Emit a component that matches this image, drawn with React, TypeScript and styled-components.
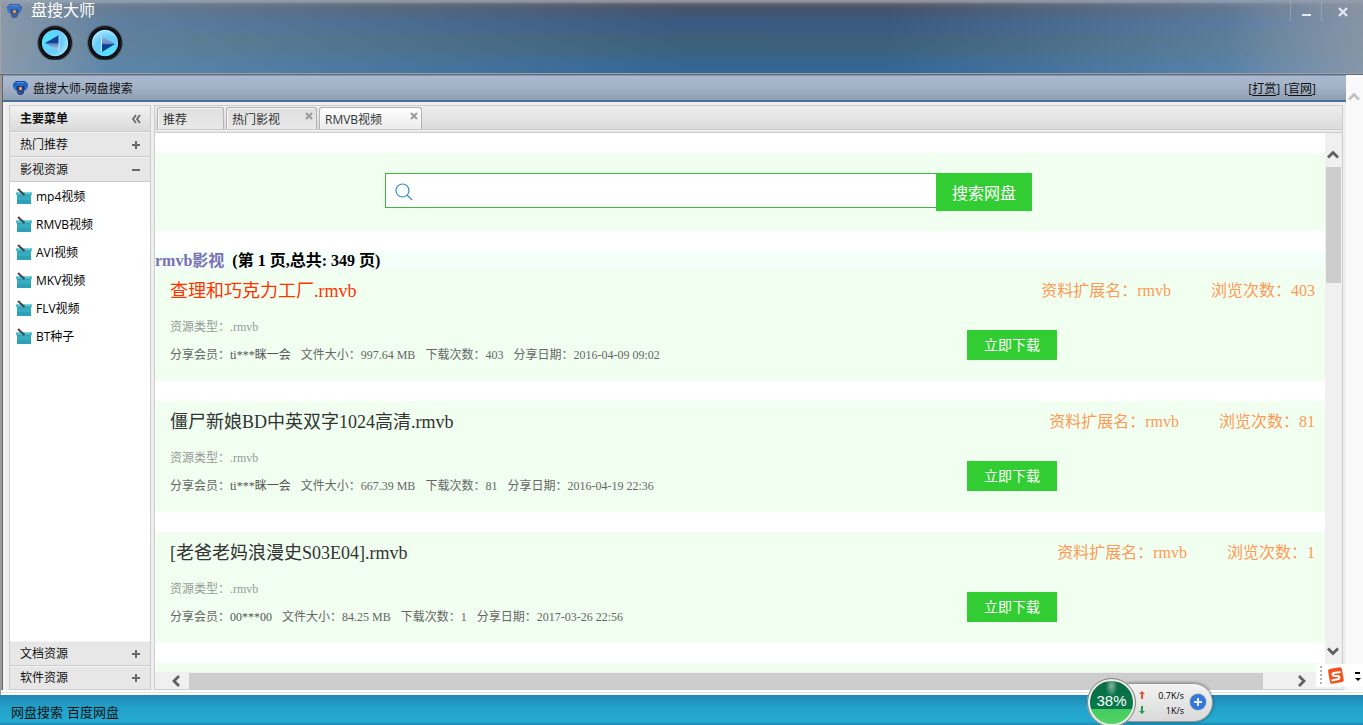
import React from "react";
import styled, { createGlobalStyle, css } from "styled-components";

const ui = `"Open Sans", "Noto Sans CJK SC", sans-serif`;
const song = `"Liberation Serif", "Noto Sans CJK SC", serif`;
const line = "#cdcdcd";

const GlobalStyle = createGlobalStyle`
  * { box-sizing: border-box; }
  body { margin: 0; font: 12px/16px ${ui}; color: #111; }
  button { padding: 0; border: 0; background: none; font: inherit; color: inherit; cursor: pointer; }
  h1, h2, h3, p, ul { margin: 0; padding: 0; font-weight: inherit; font-size: inherit; }
  ul { list-style: none; }
  a { color: inherit; text-decoration: none; }
  svg { display: block; flex: none; }
`;

const Desktop = styled.div`
  position: relative;
  display: flex;
  flex-direction: column;
  height: 100vh;
  overflow: hidden;
  background: #9a9a9a;
`;

const Header = styled.header`
  flex: none;
  height: 75px;
  border-bottom: 1px solid #666a70;
  box-shadow: inset 0 -1px #9aa3ad, inset 1px 0 #a3a3a3;
  background:
    linear-gradient(90deg, rgba(150, 160, 172, 0.75), rgba(150, 160, 172, 0) 8%, rgba(150, 155, 165, 0) 90%, rgba(150, 155, 165, 0.65)),
    linear-gradient(90deg, rgba(140, 170, 195, 0.55), rgba(120, 160, 195, 0) 50%, rgba(120, 155, 190, 0) 65%, rgba(135, 165, 195, 0.6)),
    linear-gradient(#9296a0 0, #8a8e99 2px, #5b5f6c 4px, #47546b 8px, #3c5775 16px, #375a84 23px, #3d5f78 40px, #3a627f 52px, #346692 64px, #356694 73px);
`;

const TitleBar = styled.div`
  display: flex;
  align-items: center;
  gap: 8px;
  height: 21px;
  padding-left: 5px;
  color: #fff;
  h1 { flex: 1; font-size: 16px; line-height: 21px; }
`;

const WindowButton = styled.button<{ $width: number }>`
  display: flex;
  align-items: center;
  justify-content: center;
  width: ${(p) => p.$width}px;
  height: 20px;
  padding-top: 2px;
  border-left: 1px solid rgba(190, 200, 215, 0.35);
  & + & { margin-left: -8px; }
`;

const NavButtons = styled.nav`
  display: flex;
  gap: 10px;
  height: 40px;
  padding: 1px 35px;
`;

const Body = styled.div`
  flex: 1;
  display: flex;
  min-height: 0;
  margin-left: 2px;
  border-left: 1px solid #666;
  background: #f9f9f9;
`;

const Workspace = styled.div`
  flex: 1;
  display: flex;
  flex-direction: column;
  min-width: 0;
  background: #efefef;
`;

const SiteBar = styled.div`
  flex: none;
  display: flex;
  align-items: center;
  height: 27px;
  padding: 0 30px 0 8px;
  border-top: 1px solid #8199b8;
  border-bottom: 2px solid #4a6f98;
  background: linear-gradient(#a9b9cf, #a5b4c8 40%, #8f9fb3);
  h2 { flex: 1; padding: 1px 0 0 4px; }
`;

const SiteLinks = styled.div`
  display: flex;
  gap: 4px;
  padding-top: 1px;
  a { text-decoration: underline; text-underline-offset: 2px; }
`;

const Columns = styled.div`
  flex: 1;
  display: flex;
  gap: 3px;
  min-height: 0;
  padding: 3px 3px 0 6px;
`;

const Sidebar = styled.aside`
  flex: none;
  display: flex;
  flex-direction: column;
  width: 142px;
  border: 1px solid ${line};
  background: #fff;
`;

const SideHead = styled.button<{ $title?: boolean }>`
  flex: none;
  display: flex;
  align-items: center;
  justify-content: space-between;
  height: 25px;
  padding: 0 9px 0 10px;
  border-top: 1px solid #f3f3f3;
  border-bottom: 1px solid ${line};
  background: #e7e7e7;
  &:last-child { height: 23px; border-bottom: 0; }
  ${(p) =>
    p.$title &&
    css`
      height: 26px;
      font-weight: 700;
      background: linear-gradient(#f1f1f1, #dadada);
    `}
`;

const SideList = styled.ul`
  flex: 1;
  min-height: 0;
`;

const SideLink = styled.a`
  display: flex;
  align-items: center;
  gap: 4px;
  height: 28px;
  padding: 2px 6px 0;
  color: #000;
`;

const Main = styled.main`
  flex: 1;
  display: flex;
  flex-direction: column;
  min-width: 0;
  border: 1px solid ${line};
  background: #fff;
`;

const Tabs = styled.div`
  flex: none;
  display: flex;
  align-items: flex-end;
  gap: 2px;
  height: 24px;
  padding-left: 2px;
  border-bottom: 1px solid ${line};
  background: linear-gradient(#ededed, #dbdbdb);
`;

const TabGap = styled.div`
  flex: none;
  height: 3px;
  border-bottom: 1px solid ${line};
  background: #ebebeb;
`;

const Tab = styled.div<{ $width: number; $active?: boolean }>`
  display: flex;
  align-items: flex-start;
  justify-content: space-between;
  width: ${(p) => p.$width}px;
  height: 22px;
  padding: 4px 3px 0 5px;
  border: 1px solid #b4b4b4;
  border-bottom: 0;
  border-radius: 3px 3px 0 0;
  box-shadow: inset 1px 1px #f6f6f6;
  background: ${(p) => (p.$active ? "linear-gradient(#fff, #ebebeb)" : "linear-gradient(#dfdfdf, #e9e9e9)")};
  color: #333;
`;

const Frame = styled.div`
  flex: 1;
  display: grid;
  grid-template: minmax(0, 1fr) 17px / minmax(0, 1fr) 17px;
  min-height: 0;
  background: #f0f0f0;
`;

const Page = styled.div`
  overflow: hidden;
  padding-top: 20px;
  background: #fff;
  font-family: ${song};
`;

const SearchForm = styled.form`
  display: flex;
  align-items: flex-start;
  height: 78px;
  padding: 20px 230px;
  margin-bottom: 20px;
  background: #f0fff0;
`;

const SearchBox = styled.label`
  display: flex;
  align-items: center;
  gap: 8px;
  flex: 0 0 551px;
  height: 35px;
  padding: 2px 8px 0 9px;
  border: 1px solid #3fb83f;
  border-right: 0;
  background: #fff;
  input { flex: 1; border: 0; outline: 0; background: none; font: 16px ${song}; }
`;

const SearchButton = styled.button`
  flex: none;
  width: 96px;
  height: 38px;
  padding-top: 3px;
  background: #32cd32;
  color: #fff;
  font-size: 16px;
`;

const PageTitle = styled.h2`
  display: flex;
  gap: 8px;
  height: 19px;
  background: #f5fffa;
  color: #000;
  font-size: 16px;
  line-height: 19px;
  font-weight: 700;
  span { color: #7a70b6; }
`;

const Card = styled.article`
  height: 111px;
  margin-bottom: 20px;
  padding: 0 10px 0 15px;
  background: #f0fff0;
`;

const CardHead = styled.div`
  display: flex;
  gap: 40px;
  line-height: 42px;
  font-size: 16px;
  color: #ff9955;
`;

const CardTitle = styled.h3<{ $hot?: boolean }>`
  flex: 1;
  font-size: 18px;
  color: ${(p) => (p.$hot ? "#ff3300" : "#333")};
`;

const CardBody = styled.div`
  display: flex;
  align-items: center;
  justify-content: space-between;
  padding: 1px 258px 0 0;
  line-height: 28px;
  color: #666;
`;

const Kind = styled.p`
  color: #999;
`;

const Facts = styled.p`
  display: flex;
  gap: 10px;
  b { font-weight: 400; color: #555; }
`;

const Download = styled.button`
  flex: none;
  width: 90px;
  height: 30px;
  margin-top: 8px;
  padding-top: 2px;
  background: #32cd32;
  color: #fff;
  font-size: 14px;
`;

const VBar = styled.div`
  display: flex;
  flex-direction: column;
  justify-content: space-between;
  padding: 13px 0;
`;

const HBar = styled.div`
  grid-column: 1 / -1;
  display: flex;
  padding: 0 32px 0 13px;
`;

const Arrow = styled.button`
  flex: none;
  display: grid;
  place-items: center;
  width: 16px;
  height: 17px;
`;

const VTrack = styled.div`
  flex: 1;
  padding: 4px 1px 0;
  &::before { content: ""; display: block; height: 116px; background: #cdcdcd; }
`;

const HTrack = styled.div`
  flex: 1;
  padding: 1px 31px 0 5px;
  &::before { content: ""; display: block; height: 16px; background: #cdcdcd; }
`;

const OuterBar = styled.div`
  flex: none;
  width: 17px;
  padding-top: 13px;
`;

const Seam = styled.div`
  flex: none;
  height: 5px;
  margin-left: 1px;
  border-top: 2px solid #fff;
  border-bottom: 2px solid #fff;
  background: #e4e4e4;
`;

const Footer = styled.footer`
  flex: none;
  display: flex;
  gap: 4px;
  height: 30px;
  padding: 2px 11px 0;
  font-size: 13px;
  line-height: 30px;
  background: linear-gradient(#1f89b6, #22a2ca 45%, #24aad1 88%, #1b87ad);
`;

const Ime = styled.div`
  position: absolute;
  right: 0;
  bottom: 38px;
  display: flex;
  align-items: center;
  width: 47px;
  height: 23px;
  background: #fff;
`;

const Meter = styled.div`
  position: absolute;
  right: 150px;
  bottom: -2px;
  display: flex;
  align-items: center;
  width: 126px;
  height: 50px;
`;

const Dial = styled.div`
  z-index: 1;
  flex: none;
  width: 49px;
  height: 49px;
  border: 3px solid #eee;
  outline: 1px solid #777;
  outline-offset: -1px;
  border-radius: 50%;
  background:
    radial-gradient(ellipse at 50% 12%, rgba(255, 255, 255, 0.5), rgba(255, 255, 255, 0) 20%),
    linear-gradient(#0a6b43 0, #07794a 64%, #43cb5c 64%, #55d468);
  color: #fff;
  font: 15px/40px "Liberation Sans", sans-serif;
  text-align: center;
`;

const Pill = styled.div`
  flex: 1;
  display: flex;
  align-items: center;
  gap: 5px;
  height: 39px;
  margin-left: -24px;
  padding: 0 5px 0 26px;
  border: 1px solid #999;
  border-radius: 20px;
  background: linear-gradient(#f3f3f3, #d9d9d9);
  box-shadow: 0 0 3px rgba(0, 0, 0, 0.5);
`;

const Speeds = styled.div`
  flex: 1;
  padding-top: 1px;
  font: 9px/15px ${ui};
  color: #000;
  div { display: flex; justify-content: space-between; align-items: center; }
`;

function Logo({ faded }: { faded?: boolean }) {
  return (
    <svg width="18" height="16" viewBox="0 0 18 16" opacity={faded ? 0.75 : 1}>
      <path d="M6 10h7v3l-2 2H8l-2-2z" fill="#3c4560" />
      <path d="M5 1h9l3 3v3l-2 3-3 1H7l-3-1-2-3V4z" fill="#1a4aa6" />
      <path d="M5 2h9l2 2-1 2H4L3 4z" fill="#2168c8" />
      <path d="M6 2h7v1H6z" fill="#4c95de" />
      <path d="M2 5l3 2v3L3 9 2 7zM17 5l-3 2v3l2-1 1-2z" fill="#2f78d4" />
      <path d="M6 6h7v4H6z" fill="#163c8c" />
      <path d="M8 7h3v3H8z" fill="#f09020" />
      <path d="M9 8h1v1H9z" fill="#ffd24a" />
      <path d="M7 12l2-1h1l2 1-1 3H8z" fill="#2b4ea0" />
    </svg>
  );
}

function NavIcon({ id, back }: { id: string; back?: boolean }) {
  return (
    <svg width="40" height="38" viewBox="0 0 40 38">
      <defs>
        <radialGradient id={id} cx={back ? "30%" : "60%"} cy={back ? "40%" : "75%"} r="75%">
          <stop offset="0" stopColor="#4fe6ff" />
          <stop offset="0.6" stopColor="#6ccbfb" />
          <stop offset="1" stopColor="#b9f0ff" />
        </radialGradient>
        <linearGradient id={id + "t"} x1="0" y1="0" x2="0" y2="1">
          <stop offset="0" stopColor={back ? "#0a3f98" : "#9db8e0"} />
          <stop offset="0.5" stopColor={back ? "#0f4499" : "#5f86c0"} />
          <stop offset="0.54" stopColor={back ? "#5f84c0" : "#0b3f94"} />
          <stop offset="1" stopColor={back ? "#c4daf6" : "#0b3f94"} />
        </linearGradient>
      </defs>
      <circle cx="20" cy="21" r="18" fill="#000" opacity="0.25" />
      <circle cx="20" cy="21" r="15" fill={`url(#${id})`} stroke="#060708" strokeWidth="3.6" />
      <circle cx="20" cy="21" r="15.5" fill="none" stroke="#26292e" strokeWidth="0.8" />
      <path d={back ? "M10 21L24 13v16z" : "M30 22L17 14v16z"} fill={`url(#${id}t)`} />
      <path d={back ? "M24 13.5v15" : "M16.5 14v15.5"} stroke="#d6f6ff" strokeWidth="0.8" />
    </svg>
  );
}

function Sign({ kind }: { kind: "plus" | "minus" | "fold" }) {
  const d = { plus: "M1 5h8M5 1v8", minus: "M1 5h8", fold: "M5 1L2 5l3 4M9 1L6 5l3 4" }[kind];
  return (
    <svg width="10" height="10" viewBox="0 0 10 10" fill="none" stroke="#6a6a6a" strokeWidth={kind === "fold" ? 1.8 : 2}>
      <path d={d} />
    </svg>
  );
}

function BoxIcon() {
  return (
    <svg width="16" height="18" viewBox="0 0 16 18">
      <path d="M1 7h14v9H1z" fill="#36adc2" />
      <path d="M1 12h14v4H1z" fill="#2fa1b7" />
      <path d="M1 7h14v1H1z" fill="#2f9db2" />
      <path d="M0 4h16v3H0z" fill="#4dbdd0" />
      <path d="M0 4h16v1H0z" fill="#7fd3e0" />
      <path d="M2 1l6.5 6" stroke="#454545" strokeWidth="2" />
    </svg>
  );
}

function CloseIcon() {
  return (
    <svg width="8" height="8" viewBox="0 0 8 8" stroke="#9b9b9b" strokeWidth="2">
      <path d="M1 1l6 6M7 1L1 7" />
    </svg>
  );
}

const chevrons = {
  up: "M2 9.5l5-5 5 5",
  down: "M2 4.5l5 5 5-5",
  left: "M10 2L5 7l5 5",
  right: "M4 2l5 5-5 5",
};

function Chevron({ to, color = "#606060" }: { to: keyof typeof chevrons; color?: string }) {
  return (
    <svg width="14" height="14" viewBox="0 0 14 14" fill="none" stroke={color} strokeWidth="2.8">
      <path d={chevrons[to]} />
    </svg>
  );
}

const links = ["mp4视频", "RMVB视频", "AVI视频", "MKV视频", "FLV视频", "BT种子"];

const files = [
  { name: "查理和巧克力工厂.rmvb", views: "403", user: "ti***眯一会", size: "997.64 MB", date: "2016-04-09 09:02", hot: true },
  { name: "僵尸新娘BD中英双字1024高清.rmvb", views: "81", user: "ti***眯一会", size: "667.39 MB", date: "2016-04-19 22:36" },
  { name: "[老爸老妈浪漫史S03E04].rmvb", views: "1", user: "00***00", size: "84.25 MB", date: "2017-03-26 22:56" },
];

export default function App() {
  return (
    <Desktop>
      <GlobalStyle />
      <Header>
        <TitleBar>
          <Logo faded />
          <h1>盘搜大师</h1>
          <WindowButton $width={31} aria-label="最小化">
            <svg width="9" height="10" viewBox="0 0 9 10"><path d="M0 8h9" stroke="#e4e8ee" strokeWidth="2" /></svg>
          </WindowButton>
          <WindowButton $width={42} aria-label="关闭">
            <svg width="10" height="10" viewBox="0 0 10 10"><path d="M1 1l8 8M9 1L1 9" stroke="#e4e8ee" strokeWidth="2.4" /></svg>
          </WindowButton>
        </TitleBar>
        <NavButtons>
          <button aria-label="后退"><NavIcon id="back" back /></button>
          <button aria-label="前进"><NavIcon id="next" /></button>
        </NavButtons>
      </Header>

      <Body>
        <Workspace>
          <SiteBar>
            <Logo />
            <h2>盘搜大师-网盘搜索</h2>
            <SiteLinks>
              <span>[<a href="#reward">打赏</a>]</span>
              <span>[<a href="#home">官网</a>]</span>
            </SiteLinks>
          </SiteBar>
          <Columns>
            <Sidebar>
              <SideHead $title>主要菜单<Sign kind="fold" /></SideHead>
              <SideHead>热门推荐<Sign kind="plus" /></SideHead>
              <SideHead>影视资源<Sign kind="minus" /></SideHead>
              <SideList>
                {links.map((text) => (
                  <li key={text}><SideLink href="#list"><BoxIcon />{text}</SideLink></li>
                ))}
              </SideList>
              <SideHead>文档资源<Sign kind="plus" /></SideHead>
              <SideHead>软件资源<Sign kind="plus" /></SideHead>
            </Sidebar>
            <Main>
              <Tabs>
                <Tab $width={67}><button>推荐</button></Tab>
                <Tab $width={91}><button>热门影视</button><button aria-label="关闭热门影视"><CloseIcon /></button></Tab>
                <Tab $width={103} $active><button>RMVB视频</button><button aria-label="关闭RMVB视频"><CloseIcon /></button></Tab>
              </Tabs>
              <TabGap />
              <Frame>
                <Page>
                  <SearchForm onSubmit={(e) => e.preventDefault()}>
                    <SearchBox>
                      <svg width="18" height="18" viewBox="0 0 18 18" fill="none" stroke="#2f8fd8" strokeWidth="1.2">
                        <circle cx="7.5" cy="7.5" r="6.5" />
                        <path d="M12 12l5 5" />
                      </svg>
                      <input type="text" aria-label="搜索" />
                    </SearchBox>
                    <SearchButton type="submit">搜索网盘</SearchButton>
                  </SearchForm>
                  <PageTitle><span>rmvb影视</span>(第 1 页,总共: 349 页)</PageTitle>
                  {files.map((f) => (
                    <Card key={f.name}>
                      <CardHead>
                        <CardTitle $hot={f.hot}><a href="#file">{f.name}</a></CardTitle>
                        <span>资料扩展名：rmvb</span>
                        <span>浏览次数：{f.views}</span>
                      </CardHead>
                      <CardBody>
                        <div>
                          <Kind>资源类型：.rmvb</Kind>
                          <Facts>
                            <span>分享会员：<b>{f.user}</b></span>
                            <span>文件大小：{f.size}</span>
                            <span>下载次数：{f.views}</span>
                            <span>分享日期：{f.date}</span>
                          </Facts>
                        </div>
                        <Download>立即下载</Download>
                      </CardBody>
                    </Card>
                  ))}
                  <Card />
                </Page>
                <VBar>
                  <Arrow aria-label="向上"><Chevron to="up" /></Arrow>
                  <VTrack />
                  <Arrow aria-label="向下"><Chevron to="down" /></Arrow>
                </VBar>
                <HBar>
                  <Arrow aria-label="向左"><Chevron to="left" /></Arrow>
                  <HTrack />
                  <Arrow aria-label="向右"><Chevron to="right" /></Arrow>
                </HBar>
              </Frame>
            </Main>
          </Columns>
        </Workspace>
        <OuterBar><Arrow aria-label="页面向上"><Chevron to="up" color="#c2c2c2" /></Arrow></OuterBar>
      </Body>
      <Seam />
      <Footer><a href="#search">网盘搜索</a><a href="#baidu">百度网盘</a></Footer>

      <Ime>
        <svg width="47" height="23" viewBox="0 0 47 23">
          <path d="M5 2v20" stroke="#b5b5b5" strokeWidth="2" strokeDasharray="2 2" />
          <rect x="13" y="4" width="14" height="15" rx="2" fill="#f4511e" transform="rotate(-10 20 12)" />
          <path d="M24.5 8l-6.500 1c-2.500 1-1.500 3 1 3h2.500c2.500 0 2.500 3 0 3.200L15.500 16.500" fill="none" stroke="#fff" strokeWidth="2" />
          <path d="M39 9h5" stroke="#000" strokeWidth="2" />
          <path d="M39 14h6l-3 3z" fill="#000" />
        </svg>
      </Ime>
      <Meter>
        <Dial>38%</Dial>
        <Pill>
          <Speeds>
            <div>
              <svg width="6" height="8" viewBox="0 0 6 8"><path d="M3 0l3 3H4v5H2V3H0z" fill="#e8503a" /></svg>
              0.7K/s
            </div>
            <div>
              <svg width="6" height="8" viewBox="0 0 6 8"><path d="M3 8l3-3H4V0H2v5H0z" fill="#1f9d50" /></svg>
              1K/s
            </div>
          </Speeds>
          <svg width="18" height="18" viewBox="0 0 18 18">
            <circle cx="9" cy="9" r="9" fill="#c9ccd2" />
            <circle cx="9" cy="9" r="8" fill="#3579d8" />
            <path d="M5 9h8M9 5v8" stroke="#e8eefa" strokeWidth="2" />
          </svg>
        </Pill>
      </Meter>
    </Desktop>
  );
}
